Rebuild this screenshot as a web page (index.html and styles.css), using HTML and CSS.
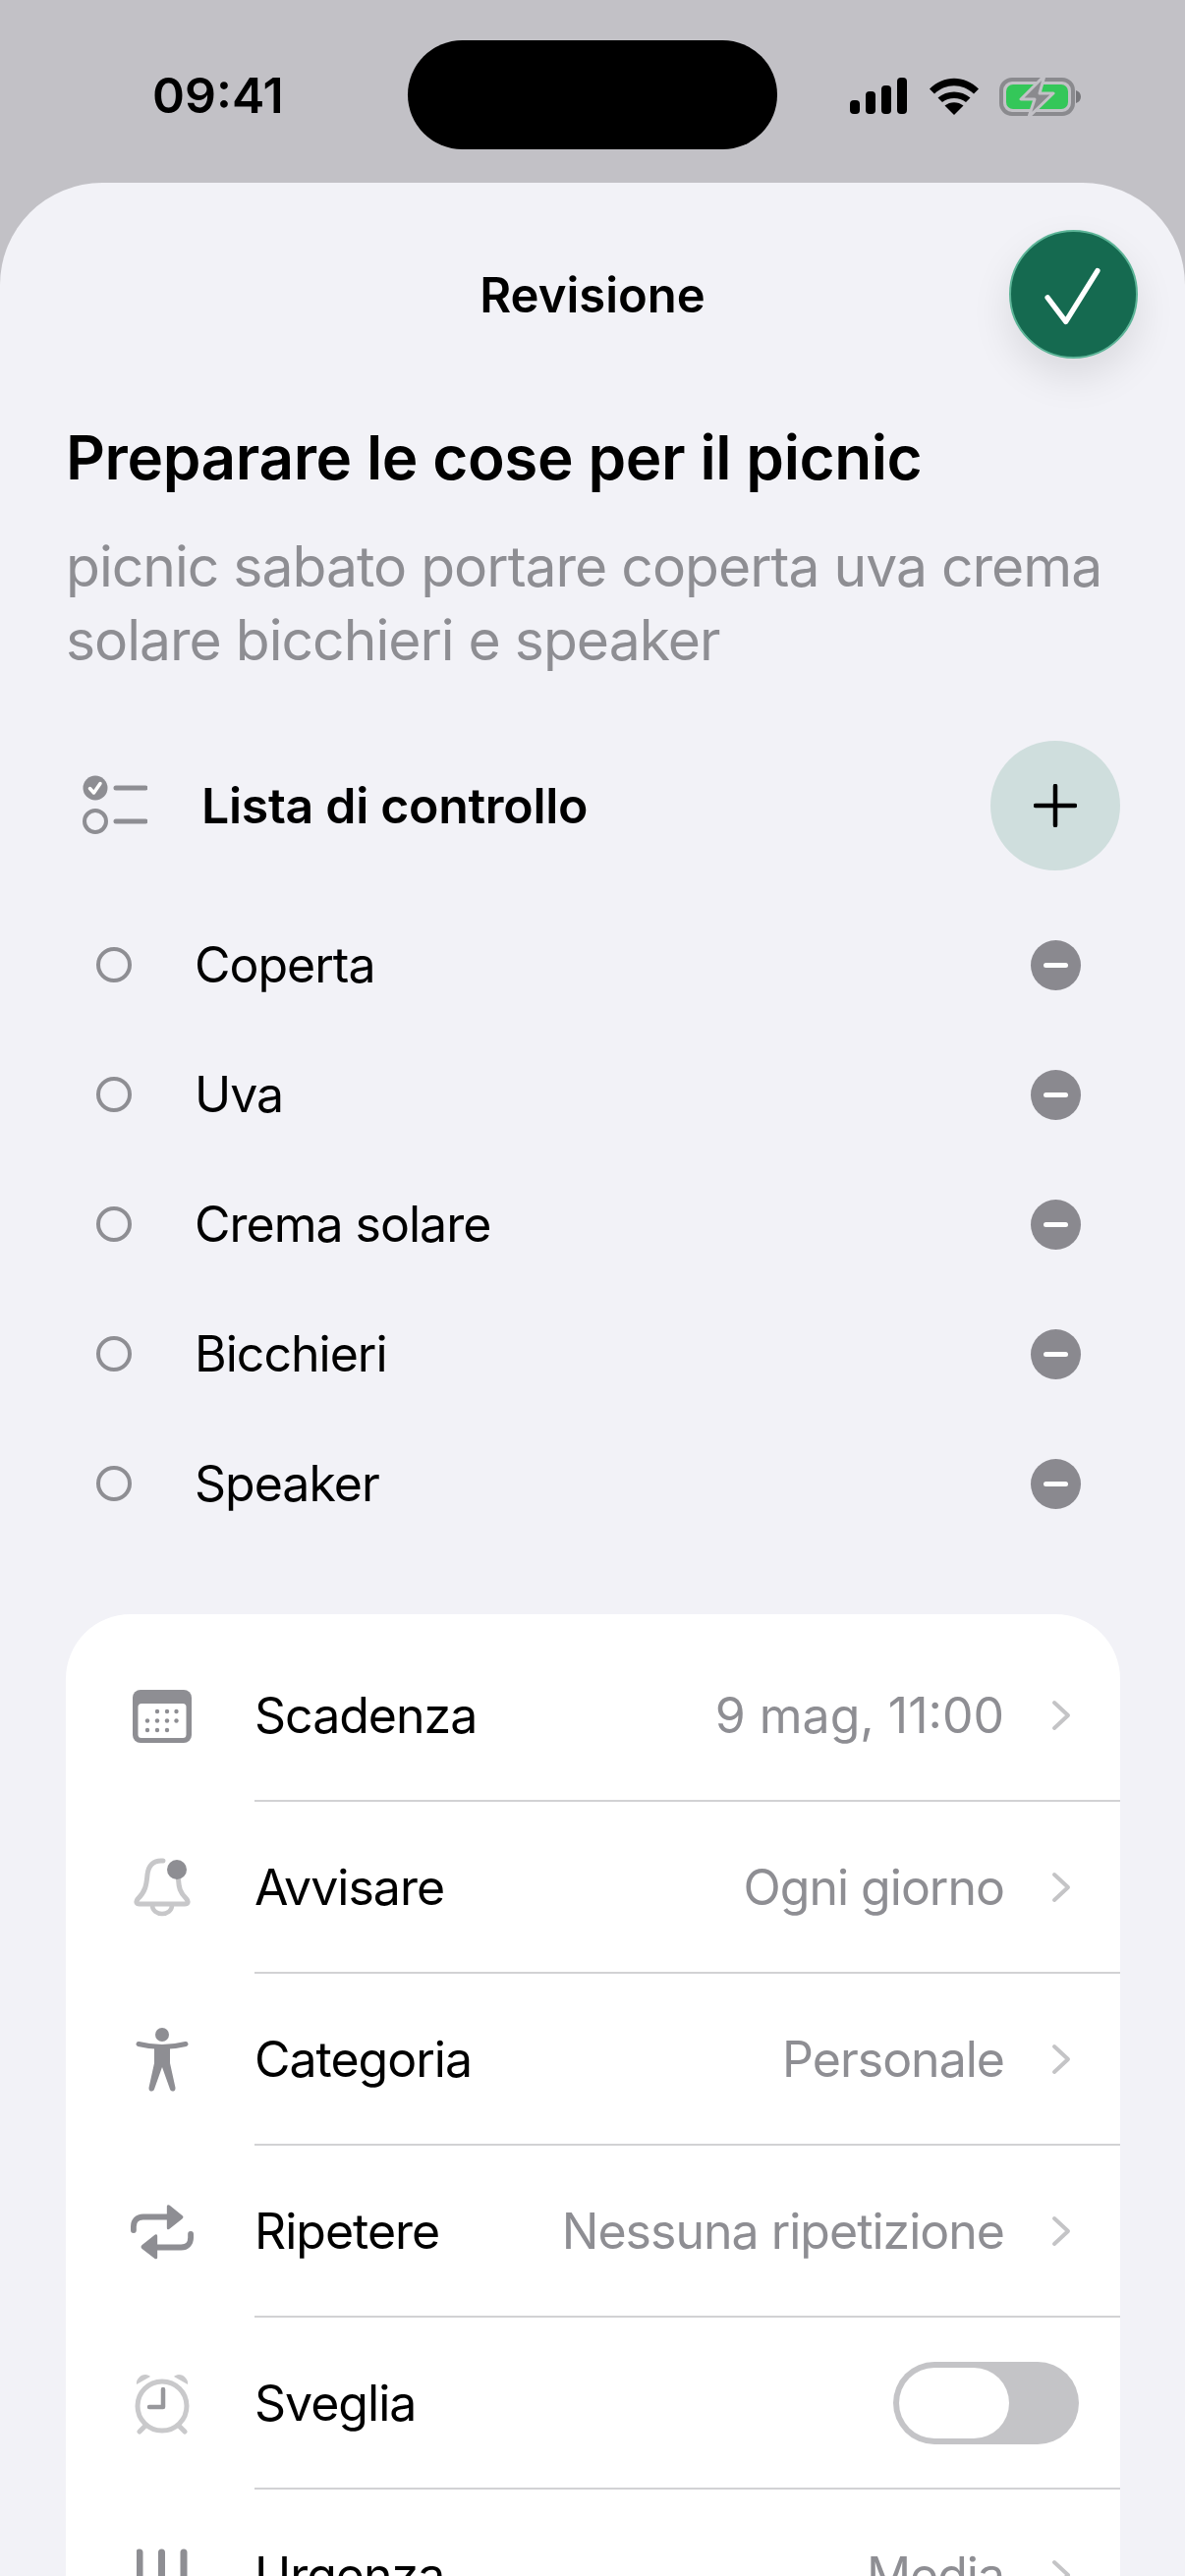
FILE: index.html
```html
<!DOCTYPE html>
<html lang="it">
<head>
<meta charset="utf-8">
<title>Revisione</title>
<link rel="stylesheet" href="styles.css">
</head>
<body>
<div class="screen">
  <header class="status">
    <span class="time">09:41</span>
    <div class="island"></div>
    <div class="status-icons">
      <svg class="signal" width="58" height="37" viewBox="0 0 58 37"><rect x="0" y="23" width="10" height="14" rx="4"/><rect x="16" y="14" width="10" height="23" rx="4"/><rect x="32" y="8" width="10" height="29" rx="4"/><rect x="48" y="0" width="10" height="37" rx="4"/></svg>
      <svg class="wifi" width="52" height="38" viewBox="0 0 52 38"><path d="M26 38 16.500 28.500C22 24 30 24 35.500 28.500Z"/><path d="M9.500 20.500C18.500 12.500 33.500 12.500 42.500 20.500L38 25C31.500 19.500 20.500 19.500 14 25Z"/><path d="M1 11.500C15.500-3 36.500-3 51 11.500L46 16.500C34.500 5.500 17.500 5.500 6 16.500Z"/></svg>
      <svg class="battery" width="84" height="44" viewBox="0 0 84 44"><rect x="2" y="5" width="73" height="35" rx="11" fill="none" stroke="#8a8a8e" stroke-width="4"/><rect x="7" y="10" width="63" height="25" rx="7" fill="#34c759"/><path d="M78 16c3 1 5 3 5 6.500s-2 5.500-5 6.500z" fill="#77777b"/><path d="M46 1 22 25H36L30 43 55 19H41Z" fill="#8a8a8e" stroke="#c2c1c6" stroke-width="3" stroke-linejoin="round"/></svg>
    </div>
  </header>

  <main class="sheet">
    <div class="nav">
      <h1 class="nav-title">Revisione</h1>
      <button class="fab" type="button">
        <svg width="130" height="130" viewBox="0 0 130 130"><path d="M38 68 57 93 90 40" fill="none" stroke="#fff" stroke-width="5.500" stroke-linecap="round" stroke-linejoin="round"/></svg>
      </button>
    </div>

    <section class="intro">
      <h2 class="task-title">Preparare le cose per il picnic</h2>
      <p class="task-desc">picnic sabato portare coperta uva crema solare bicchieri e speaker</p>
    </section>

    <div class="check-head">
      <svg class="check-icon" width="66" height="62" viewBox="0 0 66 62"><circle cx="13" cy="13" r="12.500" fill="#8e8e93"/><path d="M7.500 13.500 11.500 18 18 8.500" fill="none" stroke="#fff" stroke-width="3.500" stroke-linecap="round" stroke-linejoin="round"/><circle cx="13" cy="47" r="11" fill="none" stroke="#8e8e93" stroke-width="4"/><path d="M34 13H64M34 47H64" stroke="#8e8e93" stroke-width="5" stroke-linecap="round"/></svg>
      <h3 class="check-title">Lista di controllo</h3>
      <button class="add" type="button">
        <svg width="44" height="44" viewBox="0 0 44 44"><path d="M22 2V42M2 22H42" stroke="#000" stroke-width="4.500" stroke-linecap="round"/></svg>
      </button>
    </div>

    <ul class="check-list">
      <li class="check-item"><span class="ring"></span><span class="item-text">Coperta</span><span class="minus"></span></li>
      <li class="check-item"><span class="ring"></span><span class="item-text">Uva</span><span class="minus"></span></li>
      <li class="check-item"><span class="ring"></span><span class="item-text">Crema solare</span><span class="minus"></span></li>
      <li class="check-item"><span class="ring"></span><span class="item-text">Bicchieri</span><span class="minus"></span></li>
      <li class="check-item"><span class="ring"></span><span class="item-text">Speaker</span><span class="minus"></span></li>
    </ul>

    <section class="card">
      <div class="row">
        <span class="row-icon"><svg width="60" height="54" viewBox="0 0 60 54"><rect width="60" height="54" rx="8" fill="#8e8e93"/><rect x="5.500" y="14" width="49" height="35" rx="3.500" fill="#fff"/><g fill="#8e8e93"><circle cx="25" cy="22" r="2.200"/><circle cx="35" cy="22" r="2.200"/><circle cx="44.500" cy="22" r="2.200"/><circle cx="15" cy="31.500" r="2.200"/><circle cx="25" cy="31.500" r="2.200"/><circle cx="35" cy="31.500" r="2.200"/><circle cx="44.500" cy="31.500" r="2.200"/><circle cx="15" cy="41" r="2.200"/><circle cx="25" cy="41" r="2.200"/><circle cx="35" cy="41" r="2.200"/></g></svg></span>
        <div class="row-body"><span class="row-label">Scadenza</span><span class="row-value row-value-num">9 mag, 11:00</span><svg class="chev" width="20" height="32" viewBox="0 0 20 32"><path d="M3 3 17 16 3 29" fill="none" stroke="#c4c4c6" stroke-width="4" stroke-linecap="round" stroke-linejoin="round"/></svg></div>
      </div>
      <div class="row">
        <span class="row-icon"><svg width="58" height="62" viewBox="0 0 58 62"><path d="M30 3C20 2 15 8 14 17 13 28 12 34 4.500 41.500 1.500 45 3 47 6 47H52C55 47 56.500 45 53.500 41.500 47 35 46 30 45.500 22" fill="none" stroke="#c7c7c9" stroke-width="5" stroke-linecap="round"/><path d="M19 48C19 60 39 60 39 48" fill="none" stroke="#c7c7c9" stroke-width="4.500"/><circle cx="44" cy="12" r="10" fill="#8e8e93"/></svg></span>
        <div class="row-body"><span class="row-label">Avvisare</span><span class="row-value">Ogni giorno</span><svg class="chev" width="20" height="32" viewBox="0 0 20 32"><path d="M3 3 17 16 3 29" fill="none" stroke="#c4c4c6" stroke-width="4" stroke-linecap="round" stroke-linejoin="round"/></svg></div>
      </div>
      <div class="row">
        <span class="row-icon"><svg width="54" height="66" viewBox="0 0 54 66"><circle cx="27" cy="7" r="7" fill="#8e8e93"/><path d="M3 16.500C11 18.500 17 19.500 27 19.500S43 18.500 51 16.500" fill="none" stroke="#8e8e93" stroke-width="5" stroke-linecap="round"/><path d="M19 19H35V36L40.500 61C41 65.500 36 65.500 35 62.500L27 40 19 62.500C18 65.500 13 65.500 13.500 61L19 36Z" fill="#8e8e93"/></svg></span>
        <div class="row-body"><span class="row-label">Categoria</span><span class="row-value">Personale</span><svg class="chev" width="20" height="32" viewBox="0 0 20 32"><path d="M3 3 17 16 3 29" fill="none" stroke="#c4c4c6" stroke-width="4" stroke-linecap="round" stroke-linejoin="round"/></svg></div>
      </div>
      <div class="row">
        <span class="row-icon"><svg width="66" height="58" viewBox="0 0 66 58"><path d="M3 27V23C3 17 7 13 13 13H42" fill="none" stroke="#8e8e93" stroke-width="6" stroke-linecap="round"/><path d="M38 2C38 0 40 0 41 1L54 11.500C55.500 12.500 55.500 14 54 15L41 25.500C40 26.500 38 26.500 38 24.500Z" fill="#8e8e93"/><path d="M63 31V35C63 41 59 45 53 45H24" fill="none" stroke="#8e8e93" stroke-width="6" stroke-linecap="round"/><path d="M28 33C28 31 26 31 25 32L12 42.500C10.500 43.500 10.500 45.500 12 46.500L25 56.500C26 57.500 28 57.500 28 55.500Z" fill="#8e8e93"/></svg></span>
        <div class="row-body"><span class="row-label">Ripetere</span><span class="row-value">Nessuna ripetizione</span><svg class="chev" width="20" height="32" viewBox="0 0 20 32"><path d="M3 3 17 16 3 29" fill="none" stroke="#c4c4c6" stroke-width="4" stroke-linecap="round" stroke-linejoin="round"/></svg></div>
      </div>
      <div class="row">
        <span class="row-icon"><svg width="56" height="62" viewBox="0 0 56 62"><circle cx="28" cy="33" r="25" fill="none" stroke="#c9c9cb" stroke-width="5"/><path d="M2 11C1 6 6 1 11 1 13 1 15 2 16 3Z" fill="#c9c9cb"/><path d="M54 11C55 6 50 1 45 1 43 1 41 2 40 3Z" fill="#c9c9cb"/><path d="M11 53 5 59M45 53 51 59" stroke="#c9c9cb" stroke-width="5" stroke-linecap="round"/><path d="M29 16V34H15" fill="none" stroke="#98989c" stroke-width="4.500" stroke-linecap="round" stroke-linejoin="round"/></svg></span>
        <div class="row-body"><span class="row-label">Sveglia</span><span class="toggle"><span class="knob"></span></span></div>
      </div>
      <div class="row">
        <span class="row-icon"><svg width="52" height="56" viewBox="0 0 52 56"><path d="M3 4V56M25.500 4V56M48 4V56" stroke="#8e8e93" stroke-width="7" stroke-linecap="round"/></svg></span>
        <div class="row-body"><span class="row-label">Urgenza</span><span class="row-value">Media</span><svg class="chev" width="20" height="32" viewBox="0 0 20 32"><path d="M3 3 17 16 3 29" fill="none" stroke="#c4c4c6" stroke-width="4" stroke-linecap="round" stroke-linejoin="round"/></svg></div>
      </div>
    </section>
  </main>
</div>
</body>
</html>
```

FILE: styles.css
```css
* { box-sizing: border-box; }
html, body { margin: 0; padding: 0; }
body { font-family: Inter, "Liberation Sans", sans-serif; color: #000; }
h1, h2, h3, p, ul { margin: 0; padding: 0; }
button { border: 0; padding: 0; font: inherit; }

.screen {
  width: 1206px;
  height: 2622px;
  overflow: hidden;
  background: #c2c1c6;
  display: flex;
  flex-direction: column;
}

.status {
  position: relative;
  height: 186px;
  flex: none;
  padding: 41px 105px 0 155px;
  display: flex;
  align-items: flex-start;
  justify-content: space-between;
}
.time {
  font-size: 50px;
  font-weight: 600;
  line-height: 112px;
}
.island {
  position: absolute;
  left: 415px;
  top: 41px;
  width: 376px;
  height: 111px;
  border-radius: 56px;
  background: #000;
}
.status-icons {
  display: flex;
  align-items: center;
  height: 113px;
}
.signal { margin-right: 22px; }
.wifi { margin-right: 20px; }

.sheet {
  flex: 1;
  background: #f2f2f7;
  border-radius: 104px 104px 0 0;
  display: flex;
  flex-direction: column;
}

.nav {
  position: relative;
  height: 228px;
  padding-top: 2px;
  flex: none;
  display: flex;
  justify-content: center;
  align-items: center;
}
.nav-title {
  font-size: 49px;
  font-weight: 600;
  line-height: 60px;
}
.fab {
  position: absolute;
  left: 1027px;
  top: 48px;
  width: 131px;
  height: 131px;
  border-radius: 50%;
  background: #156a50;
  border: 2px solid #5cb497;
  box-shadow: 0 18px 40px rgba(0, 0, 0, 0.1);
  display: flex;
  align-items: center;
  justify-content: center;
}

.intro {
  padding: 14px 66px 0 67px;
}
.task-title {
  font-size: 62px;
  font-weight: 600;
  line-height: 76px;
  letter-spacing: -0.4px;
}
.task-desc {
  margin-top: 35px;
  font-size: 57px;
  line-height: 75px;
  letter-spacing: -1px;
  color: #8e8e93;
}

.check-head {
  margin-top: 65px;
  height: 132px;
  padding: 0 66px 0 84px;
  display: flex;
  align-items: center;
}
.check-title {
  margin-left: 55px;
  flex: 1;
  font-size: 50px;
  font-weight: 600;
  letter-spacing: -0.3px;
}
.add {
  width: 132px;
  height: 132px;
  border-radius: 50%;
  background: #cfdedd;
  display: flex;
  align-items: center;
  justify-content: center;
}

.check-list {
  margin-top: 30px;
  list-style: none;
}
.check-item {
  height: 132px;
  padding: 0 106px 0 98px;
  display: flex;
  align-items: center;
}
.ring {
  width: 36px;
  height: 36px;
  border-radius: 50%;
  border: 4px solid #8e8e93;
}
.item-text {
  flex: 1;
  margin-left: 64px;
  font-size: 50px;
  letter-spacing: -1px;
}
.minus {
  position: relative;
  width: 51px;
  height: 51px;
  border-radius: 50%;
  background: #8a898f;
}
.minus::after {
  content: "";
  position: absolute;
  left: 13px;
  top: 23px;
  width: 25px;
  height: 5px;
  border-radius: 3px;
  background: #fff;
}

.card {
  margin: 67px 66px 0 67px;
  padding-top: 16px;
  background: #fff;
  border-radius: 66px 66px 0 0;
  flex: 1;
}
.row {
  height: 175px;
  padding-left: 66px;
  display: flex;
}
.row-icon {
  width: 64px;
  flex: none;
  display: flex;
  align-items: center;
  justify-content: center;
}
.row-body {
  flex: 1;
  margin-left: 62px;
  padding-right: 50px;
  display: flex;
  align-items: center;
  border-bottom: 2px solid #d2d2d4;
}
.row-label {
  flex: 1;
  font-size: 50px;
  letter-spacing: -1px;
}
.row-value {
  font-size: 50px;
  letter-spacing: -1px;
  color: #8e8e93;
}
.row-value-num { letter-spacing: 0; }
.chev { margin-left: 48px; }

.toggle {
  width: 189px;
  height: 84px;
  margin-right: -8px;
  padding: 6px;
  border-radius: 42px;
  background: #c4c4c7;
}
.knob {
  display: block;
  width: 112px;
  height: 72px;
  border-radius: 36px;
  background: #fff;
}
```
